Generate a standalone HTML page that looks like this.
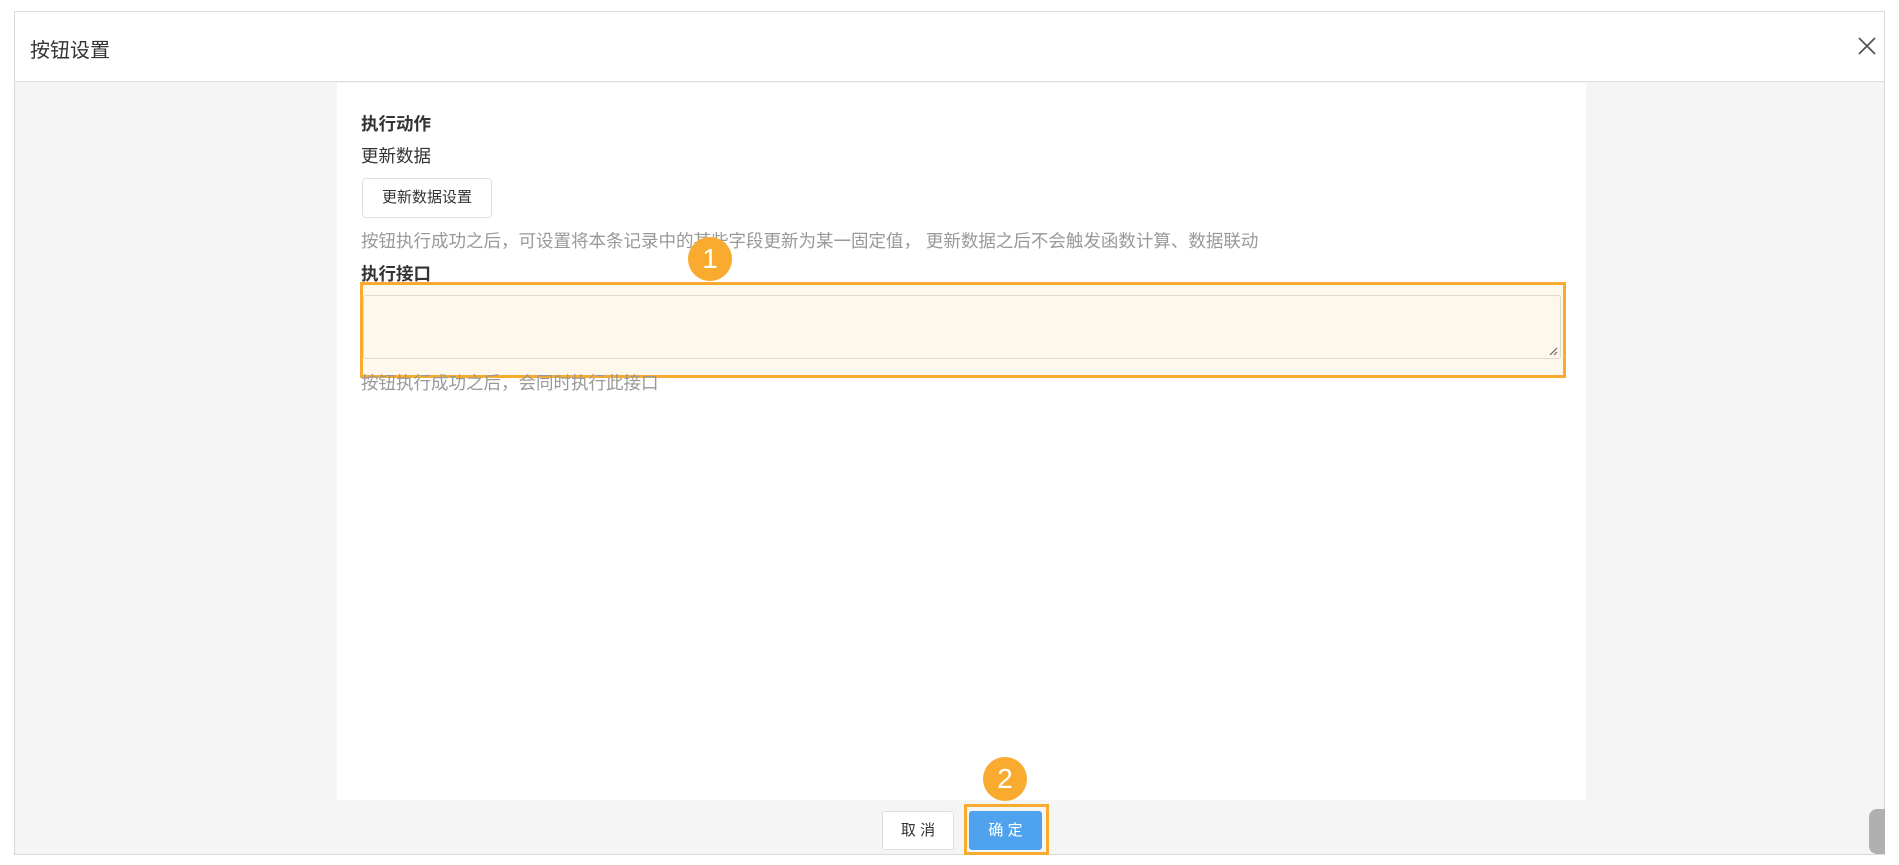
<!DOCTYPE html>
<html><head><meta charset="utf-8"><style>
*{box-sizing:border-box;margin:0;padding:0}
body{width:1899px;height:865px;background:#fff;position:relative;overflow:hidden;font-family:"Liberation Sans","Noto Sans CJK SC",sans-serif;color:#333}
.dlg{position:absolute;left:14px;top:11px;width:1871px;height:844px;border:1px solid #d9d9d9;background:#f5f5f5}
.hd{position:absolute;left:0;top:0;right:0;height:70px;background:#fff;border-bottom:1px solid #ddd}
.hd .t{position:absolute;left:15px;top:22px;font-size:20px;color:#333}
.x{position:absolute;right:6px;top:23px;width:22px;height:22px}
.panel{position:absolute;left:322px;top:71px;width:1249px;height:717px;background:#fff}
.a{position:absolute;left:361px;font-size:17.5px;white-space:nowrap}
.b{font-weight:bold;color:#333}
.g{color:#999}
.btn{position:absolute;left:362px;top:178px;width:130px;height:40px;border:1px solid #dcdfe6;border-radius:4px;background:#fff;font-size:15px;color:#333;text-align:center;line-height:38px}
.ob{position:absolute;left:360px;top:282px;width:1206px;height:96px;border:3px solid #f8ab2f;background:#fef7ec}
.ta{position:absolute;left:363px;top:295px;width:1198px;height:64px;border:1px solid #dedad0;border-radius:3px;background:#fef7ec}
.c{position:absolute;width:44px;height:44px;border-radius:50%;background:#f8ab2f;color:#fff;font-size:28px;text-align:center;line-height:44px}
.cb{position:absolute;top:811px;height:39px;border-radius:3px;font-size:15px;text-align:center;line-height:37px}
</style></head><body>
<div class="dlg">
<div class="hd"><div class="t">按钮设置</div>
<svg class="x" viewBox="0 0 22 22"><path d="M3 3L19 19M19 3L3 19" stroke="#555" stroke-width="1.8"/></svg></div>
<div class="panel"></div>
</div>
<div class="a b" style="top:111px">执行动作</div>
<div class="a" style="top:143px">更新数据</div>
<div class="btn">更新数据设置</div>
<div class="a g" style="top:228px">按钮执行成功之后，可设置将本条记录中的某些字段更新为某一固定值， 更新数据之后不会触发函数计算、数据联动</div>
<div class="a b" style="top:261px">执行接口</div>
<div class="ob"></div>
<div class="ta"><svg style="position:absolute;right:2px;bottom:2px" width="10" height="10"><path d="M9 2L2 9M9 6L6 9" stroke="#666" stroke-width="1.2"/></svg></div>
<div class="a g" style="top:370px">按钮执行成功之后，会同时执行此接口</div>
<div class="c" style="left:688px;top:237px">1</div>
<div class="c" style="left:983px;top:757px">2</div>
<div class="cb" style="left:882px;width:72px;border:1px solid #dcdfe6;background:#fff;color:#333">取 消</div>
<div style="position:absolute;left:964px;top:804px;width:85px;height:51px;border:3px solid #f8ab2f"></div>
<div class="cb" style="left:969px;width:73px;background:#4fa3ee;color:#fff;border:1px solid #4fa3ee">确 定</div>
<div style="position:absolute;left:1869px;top:809px;width:16px;height:45px;background:#b0b0b0;border-radius:8px 0 0 8px"></div>
</body></html>
